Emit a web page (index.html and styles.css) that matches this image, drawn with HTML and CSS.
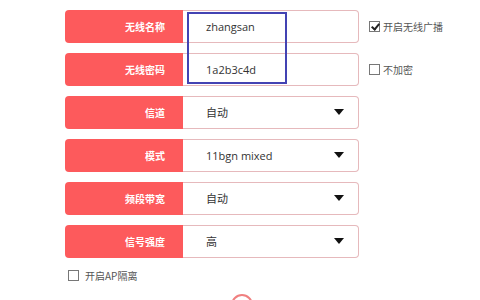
FILE: index.html
```html
<!DOCTYPE html>
<html lang="zh-CN">
<head>
  <meta charset="UTF-8">
  <title>无线设置</title>
  <link rel="stylesheet" href="styles.css">
</head>
<body>
  <div class="settings">
    <div class="row">
      <div class="label">无线名称</div>
      <div class="field">zhangsan</div>
      <label class="check"><span class="box checked"></span>开启无线广播</label>
    </div>
    <div class="row">
      <div class="label">无线密码</div>
      <div class="field">1a2b3c4d</div>
      <label class="check"><span class="box"></span>不加密</label>
    </div>
    <div class="row">
      <div class="label">信道</div>
      <div class="field select">自动<span class="arrow"></span></div>
    </div>
    <div class="row">
      <div class="label">模式</div>
      <div class="field select">11bgn mixed<span class="arrow"></span></div>
    </div>
    <div class="row">
      <div class="label">频段带宽</div>
      <div class="field select">自动<span class="arrow"></span></div>
    </div>
    <div class="row">
      <div class="label">信号强度</div>
      <div class="field select">高<span class="arrow"></span></div>
    </div>
    <label class="check isolate"><span class="box"></span>开启AP隔离</label>
    <div class="save"></div>

    <!-- annotation frame round the name / password values -->
    <div class="mark"></div>
  </div>
</body>
</html>
```
FILE: styles.css
```css
body {
  margin: 0;
  background: #ffffff;
  font-family: "Open Sans", "Noto Sans CJK SC", sans-serif;
  color: #333333;
}

.settings {
  position: relative;
  padding: 10px 0 0 65px;
  height: 290px;
  overflow: hidden;
}

.row {
  display: flex;
  align-items: center;
  height: 33px;
  margin-bottom: 10px;
}

.label {
  width: 118px;
  height: 33px;
  line-height: 33px;
  padding-right: 18px;
  box-sizing: border-box;
  text-align: right;
  background: #fd5a5c;
  color: #ffffff;
  font-family: "Noto Sans CJK SC", sans-serif;
  font-size: 10px;
  font-weight: bold;
  border-radius: 4px 0 0 4px;
}

.field {
  position: relative;
  width: 176px;
  height: 33px;
  line-height: 31px;
  box-sizing: border-box;
  padding-left: 23px;
  border: 1px solid #e6b9bc;
  border-left: none;
  border-radius: 0 4px 4px 0;
  font-size: 11px;
}

.arrow {
  position: absolute;
  right: 14px;
  top: 12px;
  width: 0;
  height: 0;
  border-left: 5px solid transparent;
  border-right: 5px solid transparent;
  border-top: 6px solid #111111;
}

.check {
  display: flex;
  align-items: center;
  margin-left: 10px;
  font-family: "Noto Sans CJK SC", sans-serif;
  font-size: 10px;
  color: #555555;
}

.box {
  position: relative;
  width: 9px;
  height: 9px;
  border: 1px solid #777777;
  margin-right: 3px;
  background: #ffffff;
}

.box.checked::after {
  content: "";
  position: absolute;
  left: 3px;
  top: 0;
  width: 3px;
  height: 6px;
  border: solid #222222;
  border-width: 0 2px 2px 0;
  transform: rotate(40deg);
}

.isolate {
  margin: 8px 0 0 3px;
}

.isolate .box {
  margin-right: 6px;
}

.save {
  width: 18px;
  height: 18px;
  margin: 11px 0 0 166px;
  border: 2px solid #f08080;
  border-radius: 50%;
}

.mark {
  position: absolute;
  left: 187px;
  top: 12px;
  width: 96px;
  height: 68px;
  border: 2px solid #4343b3;
}
```
